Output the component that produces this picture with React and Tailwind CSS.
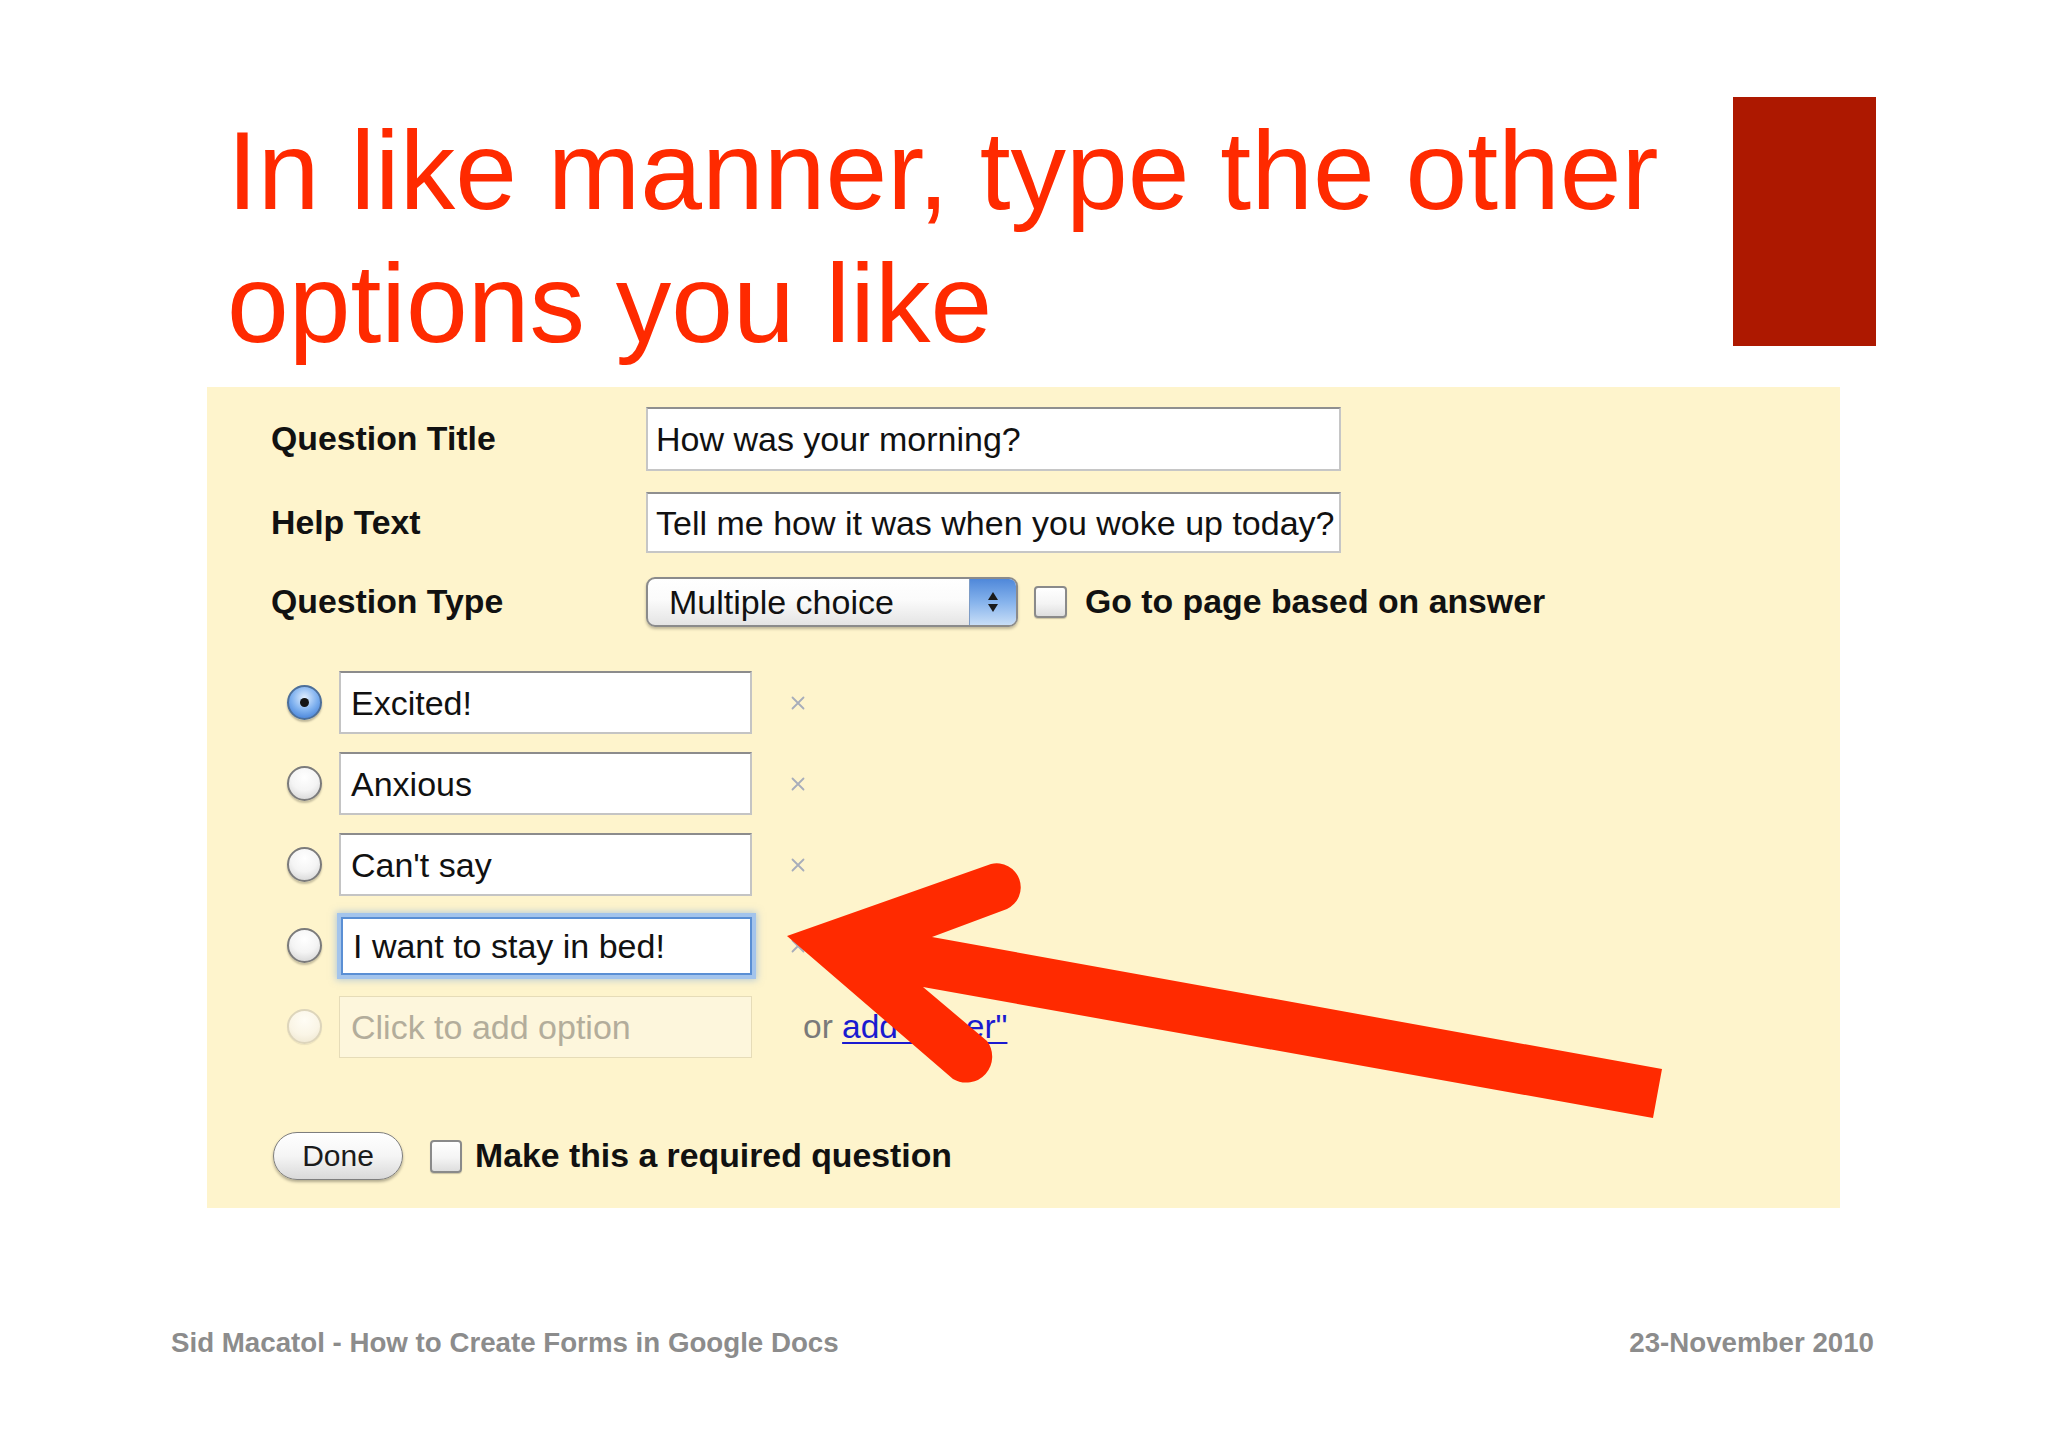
import React from "react";

const FONT = "font-['Liberation_Sans',Arial,Helvetica,sans-serif]";

function Radio({ kind }) {
  if (kind === "checked") {
    return (
      <div className="w-[35px] h-[35px] shrink-0 rounded-full border-2 border-[#4d6f99] [background-image:radial-gradient(circle_at_50%_35%,#e2efff_0%,#7fb1ef_50%,#2f6fcf_100%)] shadow-[0_2px_2px_rgba(0,0,0,0.25)] flex items-center justify-center">
        <div className="w-[9px] h-[9px] rounded-full bg-[#151515]" />
      </div>
    );
  }
  if (kind === "faded") {
    return (
      <div className="w-[35px] h-[35px] shrink-0 rounded-full border-2 border-[#ddd5bb] [background-image:radial-gradient(circle_at_50%_30%,#fffdf5_0%,#faf5e6_55%,#ece4cc_100%)] shadow-[0_1px_1px_rgba(0,0,0,0.08)]" />
    );
  }
  return (
    <div className="w-[35px] h-[35px] shrink-0 rounded-full border-2 border-[#7b7b7b] [background-image:radial-gradient(circle_at_50%_30%,#ffffff_0%,#f4f4f4_50%,#cdcdcd_100%)] shadow-[0_2px_2px_rgba(0,0,0,0.22)]" />
  );
}

function Checkbox({ className }) {
  return (
    <div
      className={
        "shrink-0 rounded-[4px] border-2 border-[#8a8a8a] [background-image:linear-gradient(#ffffff,#f4f4f4_55%,#dedede)] shadow-[0_1px_1px_rgba(0,0,0,0.2)] " +
        className
      }
    />
  );
}

function Cross() {
  return (
    <div className="w-[16px] h-[16px] relative shrink-0">
      <svg width="16" height="16" viewBox="0 0 16 16" className="block">
        <path d="M2.5 2.5 L13.5 13.5 M13.5 2.5 L2.5 13.5" stroke="#a7adba" strokeWidth="1.8" strokeLinecap="round" />
      </svg>
    </div>
  );
}

function OptionRow({ text, kind }) {
  if (kind === "focused") {
    return (
      <div className="flex items-center h-[63px]">
        <div className="ml-[16px]"><Radio kind="plain" /></div>
        <div className="ml-[19px] w-[411px] h-[58px] bg-white border-2 border-[#5a8fd4] shadow-[0_0_0_4px_#a3c4ec,0_0_7px_5px_rgba(110,160,225,0.5)] flex items-center pl-[10px] text-[34px] text-[#111] leading-none">
          {text}
        </div>
        <div className="ml-[38px]"><Cross /></div>
      </div>
    );
  }
  if (kind === "add") {
    return (
      <div className="flex items-center h-[63px]">
        <div className="ml-[16px]"><Radio kind="faded" /></div>
        <div className="ml-[17px] w-[413px] h-[62px] bg-[#fdf6dc] border border-[#e6dcb8] flex items-center pl-[11px] text-[34px] text-[#b3ad9b] leading-none">
          {text}
        </div>
        <div className="ml-[51px] text-[33.5px] leading-none text-[#7a7a7a]">
          or{" "}
          <span className="text-[#1a1ad0] underline decoration-[2px] underline-offset-[4px]">add "other"</span>
        </div>
      </div>
    );
  }
  return (
    <div className="flex items-center h-[63px]">
      <div className="ml-[16px]"><Radio kind={kind} /></div>
      <div className="ml-[17px] w-[413px] h-[63px] bg-white border-2 border-[#c4c4c4] border-t-[#8c8c8c] flex items-center pl-[10px] text-[34px] text-[#111] leading-none">
        {text}
      </div>
      <div className="ml-[38px]"><Cross /></div>
    </div>
  );
}

export default function App() {
  return (
    <div className={"relative w-[2048px] h-[1447px] bg-white overflow-hidden " + FONT}>
      <div className="pt-[97px]">
        {/* Title row */}
        <div className="flex items-start pl-[227px]">
          <h1 className="w-[1506px] mt-[8px] text-[111px] leading-[133px] text-[#ff2a00] font-normal">
            In like manner, type the other
            <br />
            options you like
          </h1>
          <div className="w-[143px] h-[249px] bg-[#ad1800] shrink-0" />
        </div>

        {/* Form panel */}
        <div className="mt-[16px] ml-[207px] w-[1633px] h-[821px] bg-[#fef4cc] pl-[64px] pt-[20px]">
          <div className="flex items-center h-[64px]">
            <div className="w-[375px] text-[33.8px] font-bold text-[#111] leading-none">Question Title</div>
            <div className="w-[695px] h-[64px] bg-white border-2 border-[#c6c6c6] border-t-[#8f8f8f] flex items-center pl-[8px] text-[34px] text-[#111] leading-none">
              How was your morning?
            </div>
          </div>
          <div className="flex items-center h-[61px] mt-[21px]">
            <div className="w-[375px] text-[33.8px] font-bold text-[#111] leading-none">Help Text</div>
            <div className="w-[695px] h-[61px] bg-white border-2 border-[#c6c6c6] border-t-[#8f8f8f] flex items-center pl-[8px] text-[34px] text-[#111] leading-none whitespace-nowrap">
              Tell me how it was when you woke up today?
            </div>
          </div>
          <div className="flex items-center h-[50px] mt-[24px]">
            <div className="w-[375px] text-[33.8px] font-bold text-[#111] leading-none">Question Type</div>
            <div className="w-[372px] h-[50px] rounded-[9px] border-2 border-[#8b8b8b] [background-image:linear-gradient(#ffffff,#fbfbfb_45%,#e4e4e4)] shadow-[0_2px_3px_rgba(0,0,0,0.25)] flex overflow-hidden">
              <div className="flex-1 flex items-center pl-[21px] text-[34px] text-[#111] leading-none">Multiple choice</div>
              <div className="w-[47px] h-full border-l border-[#7d9cc6] [background-image:linear-gradient(#4f88da,#86b3ec_50%,#c8def7)] flex flex-col items-center justify-center gap-[4px]">
                <svg width="10" height="8" viewBox="0 0 10 8"><path d="M5 0 L10 8 L0 8 Z" fill="#1a1a1a" /></svg>
                <svg width="10" height="8" viewBox="0 0 10 8"><path d="M0 0 L10 0 L5 8 Z" fill="#1a1a1a" /></svg>
              </div>
            </div>
            <Checkbox className="ml-[16px] w-[33px] h-[32px]" />
            <div className="ml-[18px] text-[33.8px] font-bold text-[#111] leading-none">Go to page based on answer</div>
          </div>

          {/* Options */}
          <div className="mt-[44px] flex flex-col gap-[18px]">
            <OptionRow text="Excited!" kind="checked" />
            <OptionRow text="Anxious" kind="plain" />
            <OptionRow text="Can't say" kind="plain" />
            <OptionRow text="I want to stay in bed!" kind="focused" />
            <OptionRow text="Click to add option" kind="add" />
          </div>

          {/* Done row */}
          <div className="mt-[74px] flex items-center h-[48px]">
            <div className="ml-[2px] w-[130px] h-[48px] rounded-full border-[1.5px] border-[#7e7e7e] [background-image:linear-gradient(#ffffff,#f5f5f5_50%,#d9d9d9)] shadow-[0_2px_3px_rgba(0,0,0,0.3)] flex items-center justify-center text-[30px] text-[#1b1b1b] leading-none">
              Done
            </div>
            <Checkbox className="ml-[27px] w-[32px] h-[33px]" />
            <div className="ml-[13px] text-[33.8px] font-bold text-[#111] leading-none">Make this a required question</div>
          </div>
        </div>

        {/* Footer */}
        <div className="mt-[121px] flex justify-between pl-[171px] pr-[174px] text-[27.7px] font-bold text-[#8c8c8c] leading-none">
          <span>Sid Macatol - How to Create Forms in Google Docs</span>
          <span>23-November 2010</span>
        </div>
      </div>

      {/* Annotation arrow overlay */}
      <svg
        className="absolute left-0 top-0 pointer-events-none"
        width="2048"
        height="1447"
        viewBox="0 0 2048 1447"
      >
        <path
          d="M787,936 L991,864 A24,24 0 0 1 1007,909 L932,937 L1662,1069 L1653,1118 L923,987 L987,1041 A26,26 0 0 1 953,1079 Z"
          fill="#ff2a00"
        />
      </svg>
    </div>
  );
}
